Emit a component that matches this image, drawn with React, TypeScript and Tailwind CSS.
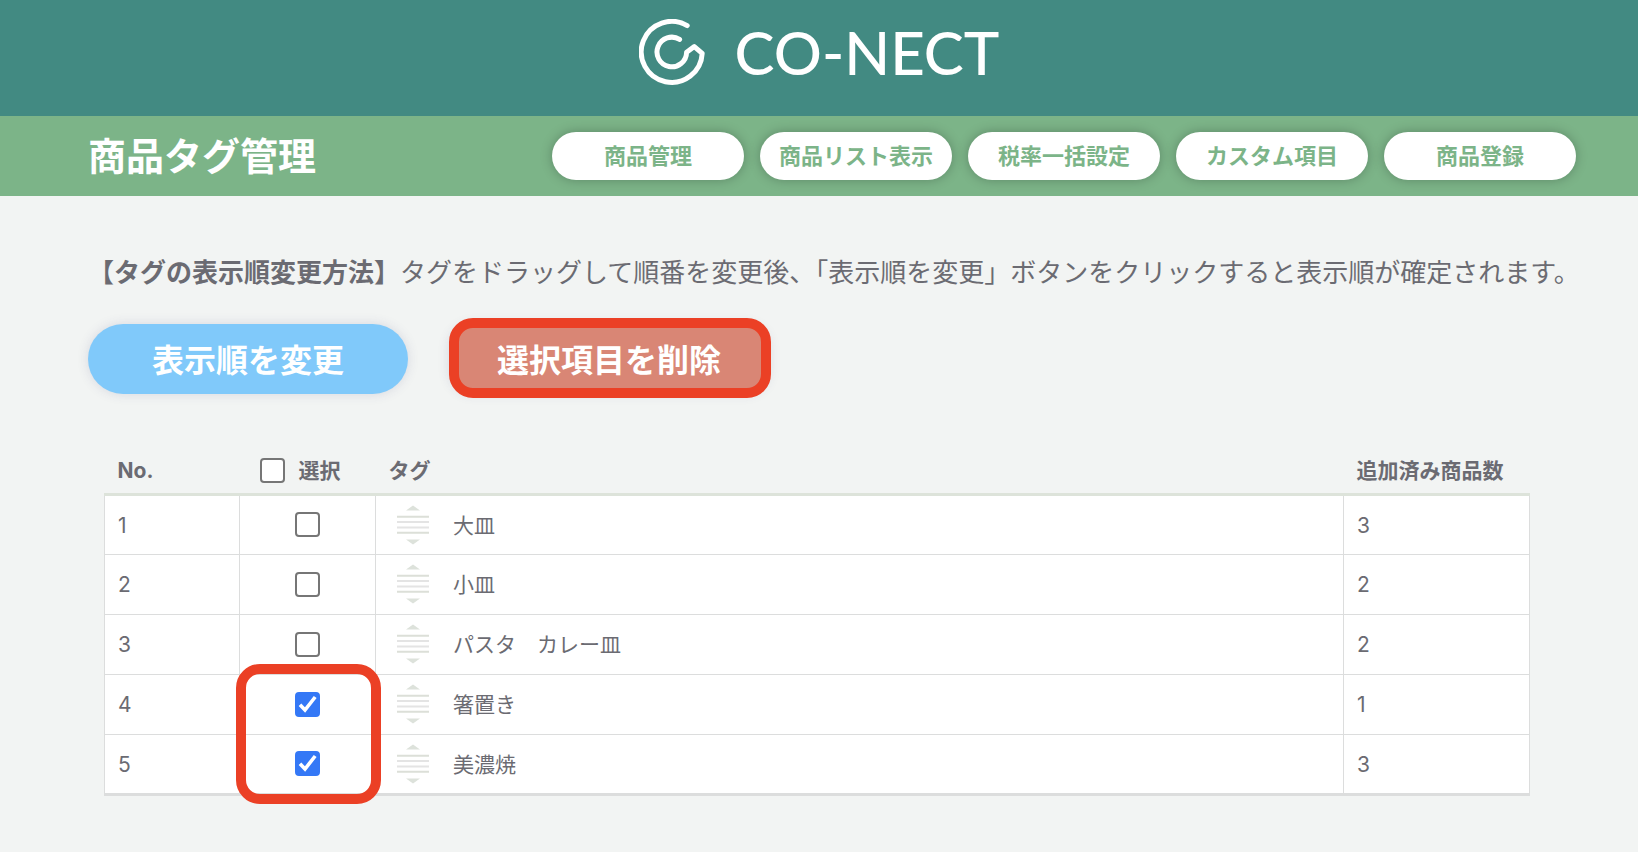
import { useState } from "react";

const navItems = ["商品管理", "商品リスト表示", "税率一括設定", "カスタム項目", "商品登録"];

type Tag = { id: number; name: string; count: number };

const tags: Tag[] = [
  { id: 1, name: "大皿", count: 3 },
  { id: 2, name: "小皿", count: 2 },
  { id: 3, name: "パスタ　カレー皿", count: 2 },
  { id: 4, name: "箸置き", count: 1 },
  { id: 5, name: "美濃焼", count: 3 },
];

function LogoMark() {
  return (
    <svg width="66" height="66" viewBox="0 0 66 66" fill="none" stroke="#fff" strokeWidth="5" strokeLinecap="round" strokeLinejoin="round" aria-hidden="true">
      <path d="M48.2 6.6A30.5 30.5 0 1 0 63.2 34.4L55.3 27.6L47.6 33.2A14.8 14.8 0 1 1 40.6 20.4" />
    </svg>
  );
}

function DragHandle() {
  return (
    <svg width="32" height="40" viewBox="0 0 32 40" className="shrink-0 cursor-move" aria-hidden="true">
      <path d="M16 0.5L23 5.5H9Z M9 34.5H23L16 39.5Z" fill="#dde2db" />
      <path d="M0 11.8H32M0 27.8H32" stroke="#dcdfd8" strokeWidth="2" />
      <path d="M0 17H32M0 22.5H32" stroke="#e4e4e4" strokeWidth="2" />
    </svg>
  );
}

function Checkbox({ label, checked, onChange }: { label: string; checked: boolean; onChange: () => void }) {
  return (
    <span className="relative block size-[25px]">
      <input
        type="checkbox"
        aria-label={label}
        checked={checked}
        onChange={onChange}
        className="block size-[25px] appearance-none rounded-[4px] border-2 border-[#767676] bg-white checked:border-[#3478f6] checked:bg-[#3478f6]"
      />
      {checked && (
        <svg viewBox="0 0 25 25" className="pointer-events-none absolute inset-0 size-[25px]" fill="none" stroke="#fff" strokeWidth="3.6" aria-hidden="true">
          <path d="M5 12.8L10 18L20.2 5" />
        </svg>
      )}
    </span>
  );
}

export default function App() {
  const [selected, setSelected] = useState<number[]>([4, 5]);
  const allSelected = selected.length === tags.length;
  const toggle = (id: number) =>
    setSelected((ids) => (ids.includes(id) ? ids.filter((i) => i !== id) : [...ids, id]));

  return (
    <div className="min-h-screen bg-[#f2f4f3] font-['Noto_Sans_CJK_JP',sans-serif] text-[#6b6b72]">
      <header className="flex h-[116px] justify-center bg-[#428a82] pt-[19px]">
        <a href="#" className="flex h-[66px] items-center gap-[30px] text-white">
          <LogoMark />
          <span className="font-['Lato',sans-serif] text-[60px] leading-[64px] font-medium">CO-NECT</span>
        </a>
      </header>

      <div className="flex h-20 items-center justify-between bg-[#7cb488] pr-[62px] pl-[88px]">
        <h1 className="pb-1 text-[38px] leading-[48px] font-bold text-white">商品タグ管理</h1>
        <nav className="flex gap-4">
          {navItems.map((item) => (
            <a
              key={item}
              href="#"
              className="flex h-12 w-48 items-center justify-center rounded-full bg-white pb-1 text-[22px] leading-8 font-bold text-[#7cb488] shadow-[0_0_12px_rgba(0,0,0,0.25)]"
            >
              {item}
            </a>
          ))}
        </nav>
      </div>

      <main className="pt-[55px] pr-[62px] pb-12 pl-[88px]">
        <p className="text-[26px] leading-10 whitespace-nowrap">
          <strong className="font-bold">【タグの表示順変更方法】</strong>
          タグをドラッグして順番を変更後、「表示順を変更」ボタンをクリックすると表示順が確定されます。
        </p>

        <div className="mt-[33px] flex gap-[41px]">
          <button type="button" className="h-[70px] w-80 rounded-full bg-[#80c9fa] pb-0.5 text-[32px] leading-10 font-bold text-white shadow-[0_0_12px_rgba(60,60,120,0.15)]">
            表示順を変更
          </button>
          <div className="relative">
            <button type="button" className="h-[70px] w-80 rounded-3xl bg-[#d98675] pb-0.5 text-[32px] leading-10 font-bold text-white shadow-[0_0_12px_rgba(60,60,120,0.15)]">
              選択項目を削除
            </button>
            <span className="pointer-events-none absolute -top-1.5 -right-0.5 -bottom-1 left-0 rounded-3xl border-10 border-[#eb4025]" />
          </div>
        </div>

        <table className="mt-[54px] mr-[46px] ml-4 w-[calc(100%-62px)] table-fixed border-collapse text-left text-[21px] leading-8">
          <colgroup>
            <col className="w-[135px]" />
            <col className="w-[136px]" />
            <col />
            <col className="w-[186px]" />
          </colgroup>
          <thead>
            <tr className="h-[46px] border-b-3 border-[#dde3da] font-bold">
              <th scope="col" className="px-[13px] pt-0.5 font-['Inter',sans-serif]">No.</th>
              <th scope="col" className="pl-5">
                <span className="flex items-center gap-3.5">
                  <Checkbox
                    label="すべて選択"
                    checked={allSelected}
                    onChange={() => setSelected(allSelected ? [] : tags.map((t) => t.id))}
                  />
                  <span className="pb-0.5">選択</span>
                </span>
              </th>
              <th scope="col" className="px-[13px] pb-0.5">タグ</th>
              <th scope="col" className="px-[13px] pb-0.5">追加済み商品数</th>
            </tr>
          </thead>
          <tbody className="border-b-3 border-[#dcdddd] bg-white">
            {tags.map((tag) => (
              <tr key={tag.id} className="h-[60px]">
                <td className="border border-[#dcdddd] px-[13px] pt-0.5 font-['Inter',sans-serif]">{tag.id}</td>
                <td className="relative border border-[#dcdddd]">
                  <div className="flex justify-center">
                    <Checkbox label={tag.name} checked={selected.includes(tag.id)} onChange={() => toggle(tag.id)} />
                  </div>
                  {tag.id === 4 && (
                    <span className="pointer-events-none absolute -top-[11px] -right-1.5 -left-1 z-10 h-[140px] rounded-3xl border-10 border-[#eb4025]" />
                  )}
                </td>
                <td className="border border-[#dcdddd] px-[21px]">
                  <div className="flex items-center gap-6">
                    <DragHandle />
                    <span className="pb-0.5">{tag.name}</span>
                  </div>
                </td>
                <td className="border border-[#dcdddd] px-[13px] pt-0.5 font-['Inter',sans-serif]">{tag.count}</td>
              </tr>
            ))}
          </tbody>
        </table>
      </main>
    </div>
  );
}
